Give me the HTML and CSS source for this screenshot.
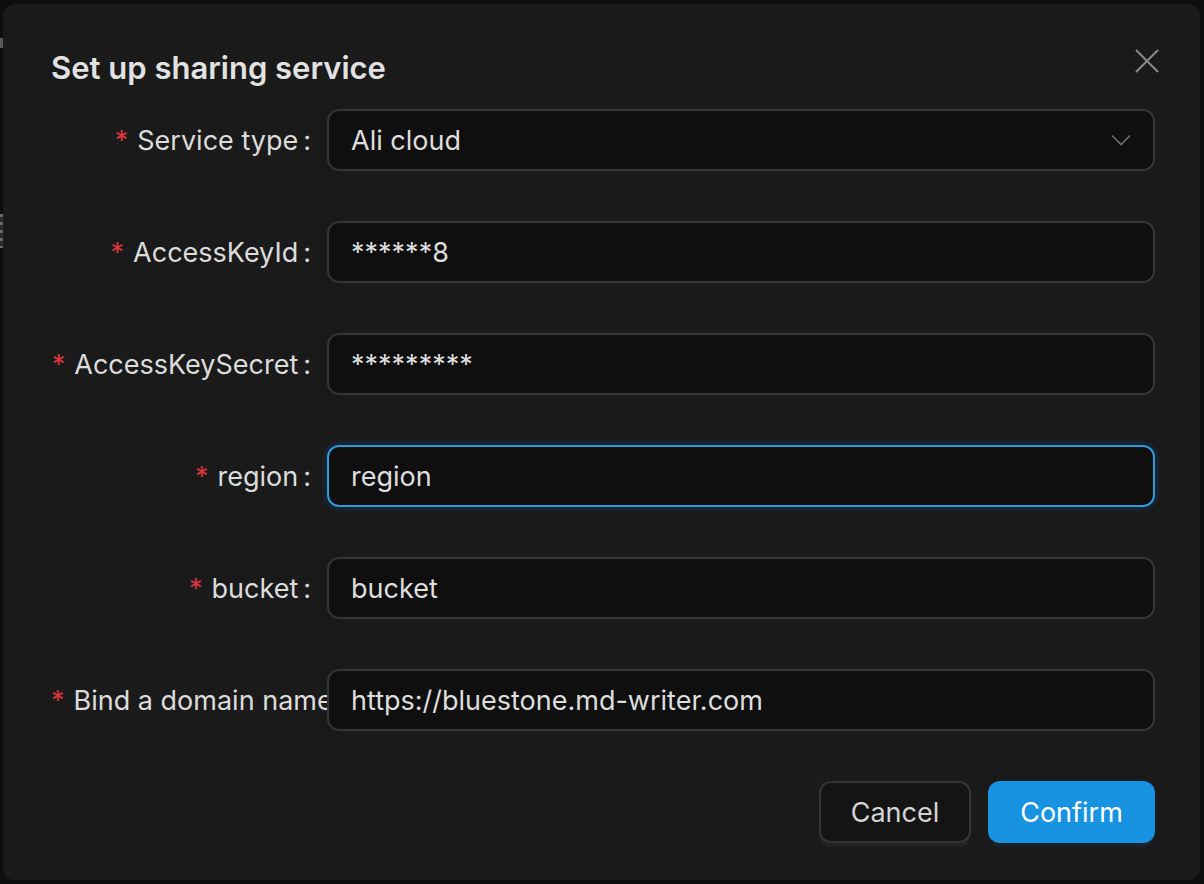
FILE: index.html
```html
<!DOCTYPE html>
<html>
<head>
<meta charset="utf-8">
<link rel="stylesheet" href="styles.css">
</head>
<body>
<div class="bg-glyph bg-glyph-a"></div>
<div class="bg-glyph bg-glyph-b"></div>
<div class="modal">
  <button class="close" aria-label="Close">
    <svg width="24" height="24" viewBox="0 0 24 24"><path d="M1 1L23 23M23 1L1 23" stroke="#8a8a8a" stroke-width="2" fill="none"/></svg>
  </button>
  <h1 class="title">Set up sharing service</h1>
  <form class="form">
    <div class="row">
      <label class="label"><span class="req">*</span>Service type</label>
      <div class="field select">
        <span class="value">Ali cloud</span>
        <svg class="chev" width="20" height="12" viewBox="0 0 20 12"><path d="M1 1.5L10 10.5L19 1.5" stroke="#6e6e6e" stroke-width="1.6" fill="none"/></svg>
      </div>
    </div>
    <div class="row">
      <label class="label"><span class="req">*</span>AccessKeyId</label>
      <div class="field"><span class="value">******8</span></div>
    </div>
    <div class="row">
      <label class="label"><span class="req">*</span>AccessKeySecret</label>
      <div class="field"><span class="value">*********</span></div>
    </div>
    <div class="row">
      <label class="label"><span class="req">*</span>region</label>
      <div class="field focused"><span class="value">region</span></div>
    </div>
    <div class="row">
      <label class="label"><span class="req">*</span>bucket</label>
      <div class="field"><span class="value">bucket</span></div>
    </div>
    <div class="row">
      <label class="label overflow"><span class="req">*</span>Bind a domain name</label>
      <div class="field"><span class="value">https://bluestone.md-writer.com</span></div>
    </div>
    <div class="footer">
      <button type="button" class="btn btn-cancel">Cancel</button>
      <button type="button" class="btn btn-primary">Confirm</button>
    </div>
  </form>
</div>
</body>
</html>
```

FILE: styles.css
```css
html, body {
  margin: 0;
  padding: 0;
}
body {
  width: 1204px;
  height: 884px;
  background: #0e0e0e;
  font-family: Inter, "Noto Sans", sans-serif;
  position: relative;
  overflow: hidden;
}
.bg-glyph {
  position: absolute;
  left: 0;
  width: 3px;
  background: #5a5a5a;
}
.bg-glyph-a {
  top: 38px;
  height: 10px;
}
.bg-glyph-b {
  top: 214px;
  height: 34px;
  background: repeating-linear-gradient(#6a6a6a 0 3px, #2a2a2a 3px 8px);
}
.modal {
  position: absolute;
  left: 3px;
  top: 4px;
  width: 1197px;
  height: 876px;
  box-sizing: border-box;
  background: #1a1a1a;
  border-radius: 12px;
  padding: 44px 45px 37px 48px;
  display: flex;
  flex-direction: column;
}
.close {
  position: absolute;
  left: 1132px;
  top: 44px;
  width: 24px;
  height: 26px;
  padding: 0;
  border: 0;
  background: none;
  display: flex;
  align-items: center;
  justify-content: center;
}
.title {
  margin: 0 0 21px 0;
  font-size: 31px;
  line-height: 40px;
  font-weight: 600;
  color: #e2e2e2;
  letter-spacing: 0;
}
.form {
  display: flex;
  flex-direction: column;
  gap: 50px;
}
.row {
  display: flex;
  align-items: center;
  height: 62px;
}
.label {
  width: 276px;
  flex: none;
  text-align: right;
  white-space: nowrap;
  overflow: hidden;
  font-size: 27px;
  color: #dcdcdc;
  box-sizing: border-box;
}
.label::after {
  content: ":";
  margin: 0 16px 0 5px;
}
.label.overflow {
  text-align: left;
}
.req {
  color: #d9363e;
  margin-right: 9px;
}
.field {
  flex: 1;
  height: 62px;
  box-sizing: border-box;
  background: #0f0f0f;
  border: 2px solid #353535;
  border-radius: 12px;
  display: flex;
  align-items: center;
  padding: 0 22px 0 22px;
  font-size: 27px;
  color: #dedede;
}
.field.focused {
  border-color: #2a9bdc;
  box-shadow: 0 0 0 4px #172230;
}
.select {
  justify-content: space-between;
}
.footer {
  display: flex;
  justify-content: flex-end;
  gap: 17px;
}
.btn {
  height: 62px;
  border-radius: 12px;
  font-family: Inter, "Noto Sans", sans-serif;
  font-size: 27px;
  box-sizing: border-box;
  box-shadow: 0 4px 0 #222222;
}
.btn-cancel {
  width: 152px;
  background: #141414;
  border: 2px solid #343434;
  color: #d4d4d4;
}
.btn-primary {
  width: 167px;
  background: #1793e1;
  border: 0;
  color: #ffffff;
  box-shadow: 0 4px 0 #1c2229;
}
```
